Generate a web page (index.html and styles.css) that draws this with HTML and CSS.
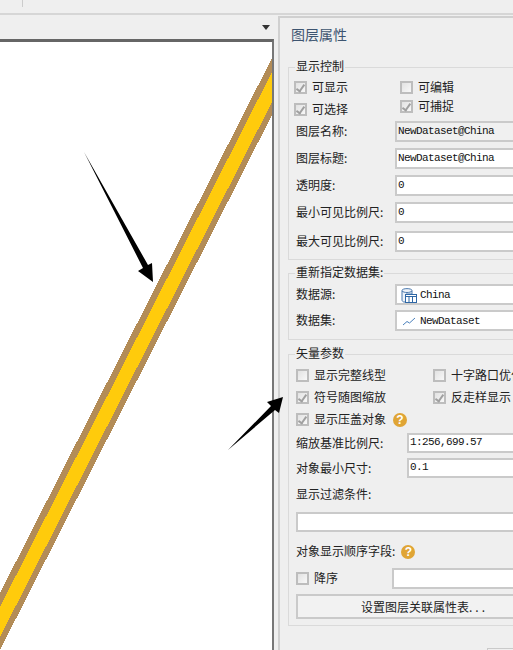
FILE: index.html
```html
<!DOCTYPE html>
<html lang="zh-CN">

<head>
    <meta charset="UTF-8">
    <meta name="viewport" content="width=device-width, initial-scale=1.0">
    <title>图层属性</title>
    <link rel="stylesheet" href="styles.css">
</head>

<body>
    <div class="top-strip"><span class="tick"></span></div>

    <div class="main">
        <div class="map-pane">
            <div class="map-head"><span class="menu-arrow"></span></div>
            <div class="map">
                <svg class="map-svg" viewBox="0 42 272 608" shape-rendering="crispEdges">
                    <polygon points="272,58 272,115 0,650 0,593" fill="#b38c57" />
                    <polygon points="272,72 272,102 0,637 0,607" fill="#ffcb0c" />
                </svg>
            </div>
        </div>

        <div class="panel">
            <div class="panel-title">图层属性</div>

            <div class="group group-display">
                <div class="group-title">显示控制</div>
                <div class="check-cols">
                    <div class="check-col col-left">
                        <div class="check-item"><span class="check on"></span><span class="txt">可显示</span></div>
                        <div class="check-item"><span class="check on"></span><span class="txt">可选择</span></div>
                    </div>
                    <div class="check-col col-right">
                        <div class="check-item"><span class="check"></span><span class="txt">可编辑</span></div>
                        <div class="check-item"><span class="check on"></span><span class="txt">可捕捉</span></div>
                    </div>
                </div>
                <div class="row first-row"><label>图层名称:</label><div class="field gray">NewDataset@China</div></div>
                <div class="row"><label>图层标题:</label><div class="field">NewDataset@China</div></div>
                <div class="row"><label>透明度:</label><div class="field">0</div></div>
                <div class="row"><label>最小可见比例尺:</label><div class="field">0</div></div>
                <div class="row last-row"><label>最大可见比例尺:</label><div class="field">0</div></div>
            </div>

            <div class="group group-data">
                <div class="group-title">重新指定数据集:</div>
                <div class="row">
                    <label>数据源:</label>
                    <div class="field icon-field">
                        <svg class="field-icon" width="16" height="16" viewBox="0 0 16 16">
                            <path d="M1 3.5C1 1 11 1 11 3.5V7H5V15H3C2 15 1 14 1 13Z" fill="#eef3f9" stroke="#4a78ad" />
                            <path d="M1 4C3 6 9 6 11 4" fill="none" stroke="#4a78ad" />
                            <rect x="4.5" y="7.5" width="11" height="8" fill="#fff" stroke="#2f67a5" />
                            <path d="M4.5 9.5H15.5M8 9.500V15.5M11.5 9.5V15.5" stroke="#2f67a5" fill="none" />
                        </svg>
                        China
                    </div>
                </div>
                <div class="row">
                    <label>数据集:</label>
                    <div class="field icon-field">
                        <svg class="field-icon" width="16" height="16" viewBox="0 0 16 16">
                            <path d="M2 12L6 8.500L8.500 10L14 5" fill="none" stroke="#4a7fbb" />
                        </svg>
                        NewDataset
                    </div>
                </div>
            </div>

            <div class="group group-vector">
                <div class="group-title">矢量参数</div>
                <div class="check-row">
                    <div class="check-item wide"><span class="check"></span><span class="txt">显示完整线型</span></div>
                    <div class="check-item"><span class="check"></span><span class="txt">十字路口优化</span></div>
                </div>
                <div class="check-row">
                    <div class="check-item wide"><span class="check on"></span><span class="txt">符号随图缩放</span></div>
                    <div class="check-item"><span class="check on"></span><span class="txt">反走样显示</span></div>
                </div>
                <div class="check-row">
                    <div class="check-item"><span class="check on"></span><span class="txt">显示压盖对象</span><span class="help">?</span></div>
                </div>
                <div class="row scale-row"><label class="long">缩放基准比例尺:</label><div class="field short">1:256,699.57</div></div>
                <div class="row size-row"><label class="long">对象最小尺寸:</label><div class="field short">0.1</div></div>
                <div class="text-row filter-label"><span class="txt">显示过滤条件:</span></div>
                <div class="field filter-field"></div>
                <div class="text-row order-label"><span class="txt">对象显示顺序字段:</span><span class="help">?</span></div>
                <div class="row order-row">
                    <div class="check-item order-check"><span class="check"></span><span class="txt">降序</span></div>
                    <div class="field"></div>
                </div>
                <div class="wide-button">设置图层关联属性表<span class="dots">...</span></div>
            </div>

            <div class="foot"><span class="foot-button"></span></div>
        </div>
    </div>

    <!-- 标注箭头，压在地图和面板上面 -->
    <svg class="arrows" width="513" height="650" viewBox="0 0 513 650">
        <polygon points="84,152 148,265 152,263 153,282 138,271 143,268" fill="#000" />
        <polygon points="228,450 271,406 267,402 283,397 279,413 275,410" fill="#000" />
    </svg>
</body>

</html>
```

FILE: styles.css
```css
body,
html {
    margin: 0;
    padding: 0;
    height: 100%;
    overflow: hidden;
    background-color: #efefef;
}

body {
    position: relative;
    display: flex;
    flex-direction: column;
    font-family: "Noto Sans CJK SC", "Liberation Sans", sans-serif;
    font-size: 12px;
    color: #222;
}

.top-strip {
    flex: none;
    height: 13px;
    border-bottom: 2px solid #d6d6d6;
    padding-left: 22px;
}

.tick {
    display: block;
    width: 1px;
    height: 7px;
    background-color: #ccc;
}

.main {
    flex: 1;
    display: flex;
    min-height: 0;
}

.map-pane {
    flex: none;
    width: 274px;
    margin-right: 4px;
    display: flex;
    flex-direction: column;
}

.map-head {
    flex: none;
    height: 24px;
    display: flex;
    justify-content: flex-end;
    padding-right: 4px;
    box-sizing: border-box;
}

.menu-arrow {
    width: 0;
    height: 0;
    margin-top: 10px;
    border-left: 4px solid transparent;
    border-right: 4px solid transparent;
    border-top: 5px solid #333;
}

.map {
    flex: 1;
    min-height: 0;
    background-color: #fff;
    border-top: 3px solid #666;
    border-right: 2px solid #777;
}

.map-svg {
    display: block;
    width: 272px;
    height: 608px;
}

.arrows {
    position: absolute;
    left: 0;
    top: 0;
    pointer-events: none;
}

.panel {
    flex: none;
    width: 292px;
    margin-top: 1px;
    padding: 7px 0 0 8px;
    box-sizing: border-box;
    border-left: 2px solid #d0d0d0;
    border-top: 2px solid #d0d0d0;
}

.panel-title {
    height: 20px;
    line-height: 18px;
    margin-left: 3px;
    font-size: 14px;
    color: #3d5470;
}

.group {
    position: relative;
    width: 270px;
    box-sizing: border-box;
    padding: 0 7px;
    border: 1px solid #dadada;
}

.group-title {
    position: absolute;
    left: 6px;
    top: -11px;
    padding: 0 1px;
    line-height: 17px;
    background-color: #efefef;
}

.group-display {
    margin-top: 22px;
    padding-top: 13px;
    padding-bottom: 7px;
}

.group-data {
    margin-top: 13px;
    padding-top: 10px;
    padding-bottom: 8px;
}

.group-data .row + .row {
    margin-top: 5px;
}

.group-vector {
    margin-top: 14px;
    padding-top: 14px;
    padding-bottom: 6px;
}

.check-cols {
    display: flex;
    margin-left: -2px;
}

.check-col {
    display: flex;
    flex-direction: column;
}

.col-left {
    width: 106px;
    gap: 9px;
}

.col-right {
    gap: 6px;
}

.check-item {
    display: flex;
    align-items: center;
    gap: 5px;
    height: 13px;
    line-height: 13px;
    white-space: nowrap;
}

.check-item.wide {
    width: 137px;
}

.txt {
    margin-top: -2px;
}

.check-row {
    display: flex;
}

.check-row + .check-row {
    margin-top: 9px;
}

.check {
    flex: none;
    width: 13px;
    height: 13px;
    box-sizing: border-box;
    border: 2px solid #bdbdbd;
    background: linear-gradient(135deg, #e2e2e2, #f8f8f8);
}

.check.on::after {
    content: "";
    display: block;
    width: 3px;
    height: 7px;
    margin-left: 2px;
    border: solid #a0a0a0;
    border-width: 0 2px 2px 0;
    transform: rotate(35deg);
}

.help {
    width: 14px;
    height: 14px;
    margin-left: 2px;
    border-radius: 50%;
    background-color: #e0a535;
    color: #fff;
    font-family: "Liberation Sans", sans-serif;
    font-weight: bold;
    font-size: 12px;
    line-height: 14px;
    text-align: center;
}

.order-label .help {
    margin-left: 6px;
}

.row {
    display: flex;
    align-items: center;
}

.row label {
    flex: none;
    width: 99px;
    padding-bottom: 2px;
}

.row label.long {
    width: 111px;
}

.row + .row {
    margin-top: 6px;
}

.first-row {
    margin-top: 5px;
}

.group-display .last-row {
    margin-top: 8px;
}

.field {
    flex: 1;
    display: flex;
    align-items: center;
    height: 21px;
    box-sizing: border-box;
    padding: 0 0 2px 1px;
    border: 2px solid #cacaca;
    background-color: #fff;
    font-family: "Liberation Mono", monospace;
    font-size: 11px;
    letter-spacing: -0.6px;
    color: #111;
}

.field.gray {
    background-color: #f0f0f0;
}

.field.short {
    height: 20px;
}

.icon-field {
    gap: 3px;
    padding-bottom: 0;
}

.field-icon {
    flex: none;
    margin-left: 3px;
}

.scale-row {
    margin-top: 7px;
}

.group-vector .size-row {
    margin-top: 5px;
}

.text-row {
    display: flex;
    align-items: center;
    height: 17px;
    line-height: 17px;
}

.filter-label {
    margin-top: 8px;
}

.filter-field {
    margin-top: 9px;
    height: 20px;
}

.order-label {
    margin-top: 11px;
}

.group-vector .order-row {
    margin-top: 8px;
}

.order-check {
    flex: none;
    width: 96px;
}

.wide-button {
    margin-top: 5px;
    height: 25px;
    line-height: 21px;
    box-sizing: border-box;
    padding-left: 3px;
    border: 2px solid #cacaca;
    background-color: #f2f2f2;
    text-align: center;
}

.dots {
    letter-spacing: 3px;
}

.foot {
    display: flex;
    padding: 22px 0 0 199px;
}

.foot-button {
    width: 60px;
    height: 20px;
    box-sizing: border-box;
    border: 1px solid #cacaca;
}
```
